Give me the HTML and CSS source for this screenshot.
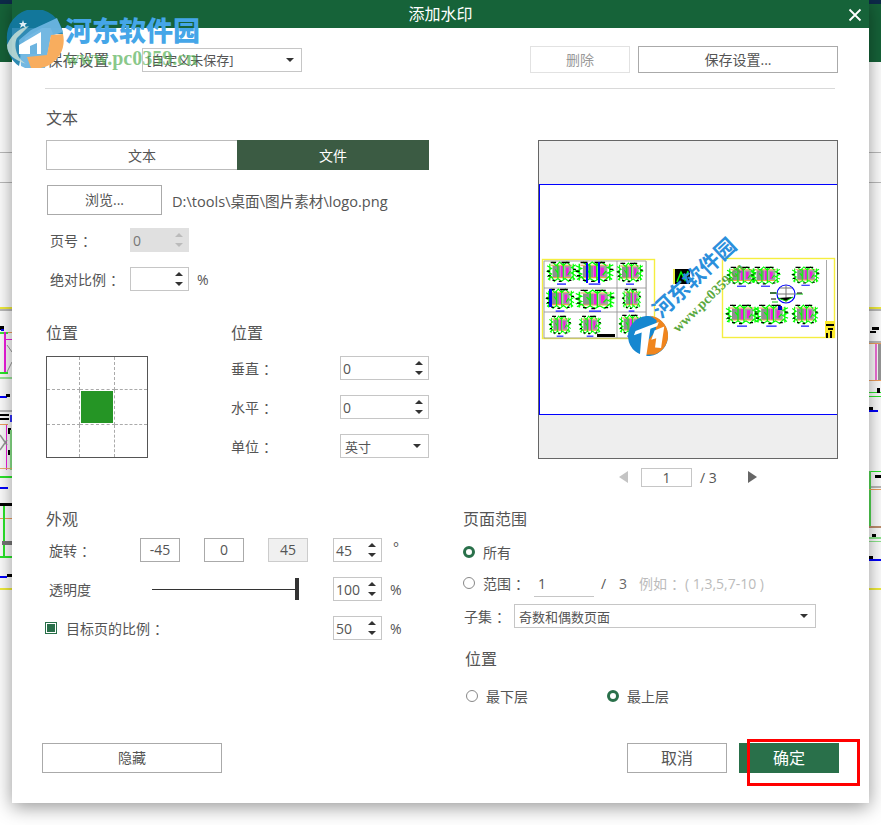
FILE: index.html
```html
<!DOCTYPE html>
<html lang="zh-CN">
<head>
<meta charset="utf-8">
<title>添加水印</title>
<link rel="stylesheet" href="styles.css">
</head>
<body>
<div class="screen">
  <svg class="backdrop" width="881" height="825" viewBox="0 0 881 825" aria-hidden="true">
    <rect x="0" y="0" width="881" height="62" fill="#166339"/>
    <rect x="0" y="0" width="12" height="4" fill="#0d2a4a"/>
    <rect x="869" y="0" width="12" height="4" fill="#0d2a4a"/>
    <g fill="#bbb">
      <rect y="152" width="881" height="1"/><rect y="182" width="881" height="1"/>
      <rect y="309" width="881" height="2"/><rect y="410" width="12" height="2"/>
      <rect x="869" y="341" width="12" height="2"/><rect x="869" y="486" width="12" height="2"/>
    </g>
    <g fill="#f2ee3c">
      <rect y="307" width="881" height="2"/><rect y="588" width="881" height="2"/>
    </g>
    <g>
      <rect x="0" y="326" width="4" height="4" fill="#000"/><rect x="1" y="329" width="3" height="2" fill="#00f"/>
      <rect x="0" y="332" width="8" height="2" fill="#3de83d"/><rect x="8" y="332" width="4" height="1" fill="#f0a060"/>
      <rect x="4" y="332" width="2" height="40" fill="#f01ee0"/><rect x="6" y="339" width="6" height="1" fill="#f01ee0"/>
      <path d="M7 345L12 352M7 372L12 362" stroke="#999" stroke-width="1" fill="none"/>
      <rect x="0" y="372" width="8" height="2" fill="#2be82b"/><rect x="0" y="377" width="12" height="2" fill="#9de89d"/>
      <rect x="0" y="396" width="7" height="2" fill="#00f"/><rect x="6" y="394" width="4" height="3" fill="#000"/>
      <rect x="0" y="414" width="9" height="2" fill="#000"/><rect x="0" y="418" width="9" height="2" fill="#000"/>
      <rect x="10" y="415" width="2" height="7" fill="#33f"/><rect x="0" y="424" width="8" height="1" fill="#f0a060"/>
      <rect x="6" y="425" width="1" height="45" fill="#f01ee0"/><rect x="8" y="428" width="3" height="6" fill="#000"/>
      <rect x="8" y="450" width="3" height="5" fill="#000"/><rect x="10" y="430" width="2" height="40" fill="#8de88d"/>
      <path d="M0 435L7 445M0 450L7 440" stroke="#999" stroke-width="1.5" fill="none"/>
      <rect x="0" y="468" width="12" height="1" fill="#f0b070"/><rect x="0" y="476" width="12" height="2" fill="#2be82b"/>
      <rect x="0" y="487" width="8" height="2" fill="#00f"/><rect x="0" y="503" width="12" height="3" fill="#000"/>
      <rect x="0" y="518" width="12" height="1" fill="#f0a060"/><rect x="3" y="506" width="2" height="50" fill="#2be82b"/>
      <rect x="2" y="541" width="10" height="4" fill="#777"/><rect x="0" y="556" width="12" height="2" fill="#2be82b"/>
      <rect x="0" y="576" width="7" height="2" fill="#00f"/><rect x="7" y="574" width="5" height="3" fill="#000"/>
    </g>
    <g>
      <rect x="872" y="327" width="7" height="3" fill="#000"/><rect x="870" y="331" width="6" height="2" fill="#000"/>
      <rect x="869" y="343" width="12" height="1" fill="#f0a060"/><rect x="875" y="344" width="2" height="36" fill="#f070d8"/>
      <rect x="878" y="344" width="3" height="36" fill="#999"/><rect x="869" y="380" width="12" height="1" fill="#f0a060"/>
      <rect x="869" y="392" width="12" height="1" fill="#2be82b"/><rect x="869" y="396" width="12" height="1" fill="#2be82b"/>
      <rect x="877" y="388" width="3" height="5" fill="#000"/>
      <rect x="869" y="407" width="4" height="3" fill="#000"/><rect x="869" y="410" width="9" height="2" fill="#00f"/>
      <rect x="869" y="471" width="2" height="55" fill="#55dd55"/><rect x="875" y="475" width="6" height="3" fill="#000"/>
      <rect x="871" y="471" width="10" height="1" fill="#2be82b"/><rect x="869" y="489" width="12" height="1" fill="#f0a060"/>
      <rect x="869" y="526" width="12" height="2" fill="#c09070"/><rect x="872" y="534" width="4" height="3" fill="#000"/>
      <rect x="869" y="537" width="12" height="2" fill="#8de88d"/><rect x="869" y="541" width="12" height="1" fill="#8de88d"/>
      <rect x="869" y="556" width="4" height="3" fill="#000"/><rect x="869" y="559" width="12" height="2" fill="#00f"/>
    </g>
  </svg>

  <div class="dialog">
    <header class="titlebar">
      <span class="title">添加水印</span>
      <svg class="close" width="14" height="14" viewBox="0 0 14 14" aria-hidden="true"><path d="M1.5 1.5L12.5 12.5M12.5 1.5L1.5 12.5" stroke="#fff" stroke-width="1.8" fill="none"/></svg>
    </header>

    <div class="top-row">
      <span class="top-label">保存设置</span>
      <div class="field select w-preset"><span>[自定义未保存]</span><i class="caret"></i></div>
      <span class="grow"></span>
      <button class="btn btn-disabled w-delete">删除</button>
      <button class="btn w-save">保存设置...</button>
    </div>
    <div class="rule"></div>

    <div class="upper">
      <section class="upper-left">
        <h2 class="heading">文本</h2>
        <div class="tabs">
          <div class="tab">文本</div>
          <div class="tab tab-active">文件</div>
        </div>
        <div class="browse-row">
          <button class="btn w-browse">浏览...</button>
          <span class="path">D:\tools\桌面\图片素材\logo.png</span>
        </div>
        <div class="row row-page">
          <span class="label w-80">页号<span class="colon">：</span></span>
          <div class="field field-disabled w-59"><span>0</span><span class="spin spin-off"><i class="up"></i><i class="down"></i></span></div>
        </div>
        <div class="row row-scale">
          <span class="label w-80">绝对比例<span class="colon">：</span></span>
          <div class="field w-59"><span></span><span class="spin"><i class="up"></i><i class="down"></i></span></div>
          <span class="unit">%</span>
        </div>
        <div class="position">
          <div class="pos-left">
            <h2 class="heading">位置</h2>
            <div class="pos-grid">
              <i></i><i></i><i></i>
              <i></i><i class="center"><b></b></i><i></i>
              <i></i><i></i><i></i>
            </div>
          </div>
          <div class="pos-right">
            <h2 class="heading">位置</h2>
            <div class="pos-rows">
              <div class="row"><span class="label w-109">垂直<span class="colon">：</span></span><div class="field w-89"><span>0</span><span class="spin"><i class="up"></i><i class="down"></i></span></div></div>
              <div class="row"><span class="label w-109">水平<span class="colon">：</span></span><div class="field w-89"><span>0</span><span class="spin"><i class="up"></i><i class="down"></i></span></div></div>
              <div class="row"><span class="label w-109">单位<span class="colon">：</span></span><div class="field select w-89"><span>英寸</span><i class="caret"></i></div></div>
            </div>
          </div>
        </div>
      </section>

      <section class="upper-right">
        <div class="preview">
          <svg class="sheet" width="298" height="231" viewBox="539 184 298 231" aria-label="预览">
            <defs>
              <g id="elev">
                <rect x="4" y="4" width="22" height="13" fill="#fff"/>
                <rect x="5" y="4" width="9" height="13" fill="#8f8f8f"/>
                <rect x="14" y="4" width="3" height="13" fill="#f01ee0"/>
                <rect x="18" y="4" width="8" height="13" fill="#a0a0a0"/>
                <rect x="20" y="6" width="3" height="9" fill="#f01ee0"/>
                <path d="M3 3.5H27M3 17H27" stroke="#f0a050" stroke-width="1.2"/>
                <path d="M0 19L4 16L7 21L11 18L15 21L19 18L23 21L27 16L30 19M2 2V20M28 2V20M-1 4L4 7L-1 10L4 13L-1 16M31 3L26 6L31 9L26 12L31 15M5 0L9 4L13 0L17 4L21 0L25 4M11 3V19M17 1V20M8 8L11 12M22 14L25 10" stroke="#0f0" stroke-width="1.3" fill="none"/>
                <path d="M3 0.5H9M15 0.5H24M-1 10H2M28 8H31M5 20H8M23 20H26M0 15H3M12 21H15" stroke="#000" stroke-width="1.5"/>
                <path d="M10 24H20" stroke="#00f" stroke-width="1.3"/>
              </g>
            </defs>
            <rect x="539.5" y="184.5" width="300" height="230" fill="#fff" stroke="#0000ff"/>
            <g>
              <rect x="542.5" y="259.5" width="112" height="79" fill="#fff" stroke="#f5ee40" stroke-width="1.4"/>
              <path d="M544 261H646V338H544ZM617 261V338M544 288H646M544 312H646" fill="none" stroke="#999" stroke-width=".9"/>
              <rect x="646" y="261" width="1" height="77" fill="#bbb"/>
              <use href="#elev" transform="translate(548 262) scale(.9 .92)"/>
              <use href="#elev" transform="translate(577 262) scale(1.17 .92)"/>
              <use href="#elev" transform="translate(618 263) scale(.8 .88)"/>
              <use href="#elev" transform="translate(547 289) scale(.87 .92)"/>
              <use href="#elev" transform="translate(577 290) scale(1.2 .88)"/>
              <use href="#elev" transform="translate(623 289) scale(.57 .92)"/>
              <use href="#elev" transform="translate(550 316) scale(.67 .84)"/>
              <use href="#elev" transform="translate(580 316) scale(.67 .84)"/>
              <use href="#elev" transform="translate(620 315) scale(.73 .88)"/>
              <rect x="586" y="263" width="2" height="20" fill="#00f"/><rect x="598" y="262" width="2" height="21" fill="#00f"/>
              <rect x="549" y="289" width="3" height="18" fill="#00f"/>
              <rect x="597" y="334" width="18" height="3" fill="#000"/>
            </g>
            <g>
              <rect x="673" y="269" width="17" height="15" fill="#000"/>
              <rect x="673" y="269" width="2" height="15" fill="#ee4"/>
              <path d="M677 282L681 272L685 280L688 271" stroke="#0f0" stroke-width="1.5" fill="none"/>
            </g>
            <g>
              <rect x="722.5" y="258.5" width="112" height="79" fill="#fff" stroke="#f5ee40" stroke-width="1.4"/>
              <rect x="826" y="260" width="1" height="62" fill="#aaa"/>
              <use href="#elev" transform="translate(728 267) scale(.9 .8)"/>
              <use href="#elev" transform="translate(752 267) scale(.9 .8)"/>
              <use href="#elev" transform="translate(793 267) scale(.84 .76)"/>
              <circle cx="786" cy="294" r="9" fill="#fff" stroke="#00f" stroke-width="1.2"/>
              <path d="M777 294H795M786 285V303M780 288H792" stroke="#777" stroke-width="1"/>
              <path d="M778 298L786 301L793 297M770 293H777M796 294H803M772 302H778" stroke="#0c0" stroke-width="1"/>
              <path d="M770 293H776M797 293H802M771 299H776" stroke="#000" stroke-width="1"/>
              <use href="#elev" transform="translate(727 305) scale(1 .88)"/>
              <use href="#elev" transform="translate(756 305) scale(1.03 .88)"/>
              <use href="#elev" transform="translate(793 305) scale(.8 .88)"/>
              <rect x="778" y="306" width="4" height="4" fill="#00c"/>
              <rect x="825" y="321" width="10" height="17" fill="#fbe92a"/>
              <path d="M826 325H834M828 329H833M827 333V338M831 331V338" stroke="#000" stroke-width="2"/>
            </g>
            <g transform="translate(661 319) rotate(-43)">
              <text class="wm-cn" x="0" y="0">河东软件园</text>
            </g>
            <g transform="translate(678 333) rotate(-44)">
              <text class="wm-en" x="0" y="0">www.pc0359.cn</text>
            </g>
            <g transform="translate(648 336) rotate(-5)">
              <circle r="20" fill="#1687d0"/>
              <path d="M4 -20A20 20 0 0 1 5 19L-8 18L-2 6L8 -4L10 -15Z" fill="#f0851e"/>
              <path d="M-12 -6L12 -13L10 -9L3 -7L-4 22L-10 20L-6 -4L-14 -2Z" fill="#fff"/>
              <path d="M7 -5L17 -8L12 13L6 12L8 3L3 4Z" fill="#fff"/>
            </g>
          </svg>
        </div>
        <div class="pager">
          <i class="tri tri-left"></i>
          <div class="page-input">1</div>
          <span class="page-total">/ 3</span>
          <i class="tri tri-right"></i>
        </div>
      </section>
    </div>

    <div class="lower">
      <section class="lower-left">
        <h2 class="heading">外观</h2>
        <div class="ap-rows">
          <div class="row ap-row">
            <span class="label w-91">旋转<span class="colon">：</span></span>
            <div class="chips">
              <button class="chip">-45</button>
              <button class="chip">0</button>
              <button class="chip chip-on">45</button>
            </div>
            <div class="field w-49 ml-25"><span>45</span><span class="spin"><i class="up"></i><i class="down"></i></span></div>
            <span class="unit unit-deg">°</span>
          </div>
          <div class="row ap-row">
            <span class="label w-103">透明度</span>
            <div class="slider"><i></i></div>
            <div class="field w-49 ml-34"><span>100</span><span class="spin"><i class="up"></i><i class="down"></i></span></div>
            <span class="unit">%</span>
          </div>
          <div class="row ap-row ap-check">
            <i class="check"></i>
            <span class="label w-267">目标页的比例<span class="colon">：</span></span>
            <div class="field w-49"><span>50</span><span class="spin"><i class="up"></i><i class="down"></i></span></div>
            <span class="unit">%</span>
          </div>
        </div>
      </section>

      <section class="lower-right">
        <h2 class="heading">页面范围</h2>
        <div class="row range-all"><i class="radio radio-on"></i><span class="label">所有</span></div>
        <div class="row range-some">
          <i class="radio"></i><span class="label w-51">范围<span class="colon">：</span></span>
          <span class="range-input">1</span>
          <span class="slash">/</span>
          <span class="total">3</span>
          <span class="hint">例如<span class="colon">：</span>( 1,3,5,7-10 )</span>
        </div>
        <div class="row range-sub">
          <span class="label w-50">子集<span class="colon">：</span></span>
          <div class="field select w-302"><span>奇数和偶数页面</span><i class="caret"></i></div>
        </div>
        <h2 class="heading heading-layer">位置</h2>
        <div class="row layers">
          <i class="radio"></i><span class="label w-121">最下层</span>
          <i class="radio radio-on"></i><span class="label">最上层</span>
        </div>
      </section>
    </div>

    <footer class="footer">
      <button class="btn w-hide">隐藏</button>
      <span class="grow"></span>
      <button class="btn btn-large w-100">取消</button>
      <button class="btn btn-large btn-primary w-100">确定</button>
    </footer>
  </div>

  <div class="watermark">
    <svg class="wm-logo" width="60" height="58" viewBox="0 0 60 58" aria-hidden="true">
      <path d="M2 30A28 28 0 0 1 58 24L48 24L44 14L20 28L14 56A28 28 0 0 1 2 30Z" fill="#127aa8" fill-opacity=".88"/>
      <path d="M26 20L52 8L58 22L46 26L40 58A28 28 0 0 1 16 56L14 30Z" fill="#6cb4e0" fill-opacity=".95"/>
      <path d="M14 35L36 22L36 44L14 44Z" fill="#ffffff"/>
      <path d="M25 36L32 33L32 44L25 44Z" fill="#6cb4e0"/>
      <path d="M58 24A28 28 0 0 1 26 58L22 47L42 45L46 25Z" fill="#f8ad5e"/>
      <path d="M2 35C8 22 16 18 24 16L12 28C8 36 12 50 22 54C8 50 2 44 2 35Z" fill="#cfe4d8" fill-opacity=".8"/>
      <path d="M18 10L19 13L22 13L20 15L21 18L18 16L15 18L16 15L14 13L17 13Z" fill="#dfeef5"/>
    </svg>
    <div class="wm-texts">
      <div class="wm-title">河东软件园</div>
      <div class="wm-url">www.pc0359.cn</div>
    </div>
  </div>

  <div class="callout"></div>
</div>
</body>
</html>
```
FILE: styles.css
```css
* { box-sizing: border-box; margin: 0; padding: 0; }
html, body { width: 881px; height: 825px; overflow: hidden; background: #fff; }
body { font-family: "Open Sans", "Noto Sans CJK SC", "Noto Sans", sans-serif; font-size: 14px; color: #555; }
i { font-style: normal; display: block; }
button { font: inherit; color: inherit; background: #fff; cursor: default; }

.screen { position: relative; width: 881px; height: 825px; overflow: hidden; background: #fff; }
.backdrop { position: absolute; left: 0; top: 0; }

.dialog { position: absolute; left: 12px; top: 0; width: 857px; height: 803px; background: #fff; box-shadow: 0 4px 18px rgba(0,0,0,.42); display: flex; flex-direction: column; }

.titlebar { height: 28px; background: #166339; color: #fff; position: relative; display: flex; align-items: center; justify-content: center; flex: none; }
.title { font-size: 16px; line-height: 28px; }
.close { position: absolute; right: 7px; top: 8px; }

.grow { flex: 1; }
.top-row { display: flex; align-items: center; height: 27px; margin: 18px 31px 0 35px; }
.top-label { width: 95px; font-size: 15.5px; line-height: 22px; }

.rule { height: 1px; background: #d9d9d9; margin: 15px 34px 0 33px; flex: none; }

.heading { font-size: 16px; font-weight: 400; line-height: 22px; height: 22px; }

.row { display: flex; align-items: center; height: 24px; }
.label { font-size: 14px; line-height: 24px; padding-top: 2px; white-space: nowrap; flex: none; }
.colon { margin-left: 4px; }
.unit { margin-left: 8px; font-size: 14px; }
.unit-deg { margin-left: 11px; margin-top: -6px; }

.w-50 { width: 50px; } .w-51 { width: 51px; } .w-80 { width: 80px; } .w-91 { width: 91px; } .w-103 { width: 103px; } .w-109 { width: 109px; } .w-121 { width: 121px; } .w-267 { width: 267px; }
.w-49 { width: 49px; } .w-59 { width: 59px; } .w-89 { width: 89px; } .w-302 { width: 302px; } .w-100 { width: 100px; }
.w-preset { width: 160px; } .w-delete { width: 100px; } .w-save { width: 200px; margin-left: 8px; } .w-hide { width: 180px; }

.ml-25 { margin-left: 25px; } .ml-34 { margin-left: 34px; }

.btn { height: 27px; border: 1px solid #aaa; font-size: 14px; line-height: 1; display: flex; align-items: center; justify-content: center; flex: none; }
.btn-large { font-size: 16px; }
.btn-disabled { border-color: #e2e2e2; color: #999; }
.btn-primary { background: #29704a; border-color: #29704a; color: #fff; margin-left: 12px; }
.w-browse { width: 115px; height: 30px; }

.field { height: 24px; border: 1px solid #c6c6c6; background: #fff; display: flex; align-items: center; justify-content: space-between; padding: 0 5px 0 2px; font-size: 14px; flex: none; }
.field-disabled { background: #e0e0e0; border-color: #e0e0e0; color: #777; padding-left: 2px; }
.select { padding: 0 7px 0 4px; font-size: 13px; }
.caret { width: 0; height: 0; border-left: 4px solid transparent; border-right: 4px solid transparent; border-top: 4px solid #333; }
.spin { display: flex; flex-direction: column; gap: 6px; }
.up, .down { width: 0; height: 0; border-left: 4px solid transparent; border-right: 4px solid transparent; }
.up { border-bottom: 4px solid #333; }
.down { border-top: 4px solid #333; }
.spin-off .up { border-bottom-color: #bbb; }
.spin-off .down { border-top-color: #bbb; }

.upper { display: flex; margin: 18px 0 0 34px; height: 401px; flex: none; }
.upper-left { width: 383px; flex: none; }
.upper-right { width: 300px; margin-left: 109px; padding-top: 33px; flex: none; }

.tabs { display: flex; height: 30px; margin-top: 11px; font-size: 14px; }
.tab { width: 191px; border: 1px solid #bbb; border-right: 0; display: flex; align-items: center; justify-content: center; background: #fff; }
.tab-active { width: 192px; background: #3b5b43; border: 0; color: #fff; }

.browse-row { display: flex; align-items: center; margin: 15px 0 0 1px; }
.path { margin-left: 10px; font-size: 14.6px; white-space: nowrap; }
.row-page { margin: 13px 0 0 4px; }
.row-scale { margin: 15px 0 0 4px; }

.position { display: flex; margin-top: 31px; }
.pos-left { width: 185px; flex: none; }
.pos-grid { display: grid; grid-template-columns: 33px 35px 32px; grid-template-rows: 33px 35px 32px; width: 102px; height: 102px; margin-top: 12px; border: 1px solid #555; }
.pos-grid i { border-right: 1px dashed #aaa; border-bottom: 1px dashed #aaa; }
.pos-grid i:nth-child(3n) { border-right: 0; }
.pos-grid i:nth-child(n+7) { border-bottom: 0; }
.pos-grid .center { display: flex; align-items: center; justify-content: center; }
.pos-grid b { display: block; width: 32px; height: 32px; background: #259525; }
.pos-right { flex: 1; }
.pos-rows { display: flex; flex-direction: column; gap: 15px; margin-top: 12px; }

.preview { width: 300px; height: 319px; border: 1px solid #666; background: #eee; display: flex; align-items: center; justify-content: center; overflow: hidden; }
.sheet { display: block; flex: none; margin-top: -1px; }
.wm-cn { font-family: "Noto Sans CJK SC", sans-serif; font-weight: 700; font-size: 21px; fill: #2b8fdc; }
.wm-en { font-family: "Liberation Serif", serif; font-weight: 700; font-size: 14px; fill: #5aa83e; }

.pager { display: flex; align-items: center; height: 18px; margin-top: 9px; padding-left: 81px; }
.tri { width: 0; height: 0; border-top: 6px solid transparent; border-bottom: 6px solid transparent; flex: none; }
.tri-left { border-right: 9px solid #c4c4c4; }
.tri-right { border-left: 9px solid #666; margin-left: 26px; }
.page-input { width: 51px; height: 19px; margin-left: 13px; border: 1px solid #c6c6c6; text-align: center; font-size: 14px; line-height: 18px; }
.page-total { margin-left: 8px; font-size: 14px; width: 22px; white-space: nowrap; }

.lower { display: flex; margin: 0 0 0 34px; height: 235px; flex: none; }
.lower-left { width: 417px; flex: none; }
.lower-right { flex: 1; }
.ap-rows { display: flex; flex-direction: column; gap: 15px; margin-top: 8px; }
.ap-row { padding-left: 3px; }
.ap-check { padding-left: 0; margin-left: -1px; }
.chips { display: flex; gap: 24px; flex: none; }
.chip { width: 40px; height: 24px; border: 1px solid #aaa; font-size: 14px; display: flex; align-items: center; justify-content: center; line-height: 1; }
.chip-on { background: #f0f0f0; border-color: #ccc; }
.slider { width: 147px; height: 22px; position: relative; flex: none; background: linear-gradient(#333, #333) left center / 100% 1px no-repeat; }
.slider i { position: absolute; right: 0; top: 0; width: 4px; height: 22px; background: #333; }
.check { width: 12px; height: 12px; border: 1px solid #29704a; background: #29704a; box-shadow: inset 0 0 0 1px #fff; margin-right: 9px; flex: none; }

.radio { width: 12px; height: 12px; border: 1px solid #888; border-radius: 50%; margin-right: 8px; flex: none; background: #fff; }
.radio-on { border: 3.5px solid #29704a; }
.range-all { margin-top: 10px; }
.range-some { margin-top: 7px; }
.range-input { width: 60px; height: 24px; border-bottom: 1px solid #c6c6c6; padding-left: 4px; line-height: 22px; flex: none; margin-top: 4px; }
.slash { margin-left: 7px; width: 18px; flex: none; }
.total { width: 20px; flex: none; color: #666; }
.hint { color: #bbb; white-space: nowrap; font-size: 14px; }
.range-sub { margin-top: 9px; margin-left: 1px; }
.heading-layer { margin: 20px 0 0 2px; }
.layers { margin: 14px 0 0 3px; }

.footer { display: flex; align-items: center; margin: 0 30px 0 30px; height: 30px; flex: none; }
.footer .btn { height: 30px; }

.watermark { position: absolute; left: 5px; top: 10px; display: flex; pointer-events: none; }
.wm-logo { flex: none; display: block; }
.wm-texts { margin-left: 0; padding-top: 2px; }
.wm-title { font-family: "Noto Sans CJK SC", sans-serif; font-weight: 900; font-size: 27px; line-height: 36px; color: #45a6e8; white-space: nowrap; }
.wm-url { font-family: "Liberation Serif", serif; font-weight: 700; font-size: 20px; line-height: 20px; color: rgba(86,176,86,.7); white-space: nowrap; margin-top: 0; }

.callout { position: absolute; left: 747px; top: 739px; width: 113px; height: 47px; border: 3px solid #f00; }
```
